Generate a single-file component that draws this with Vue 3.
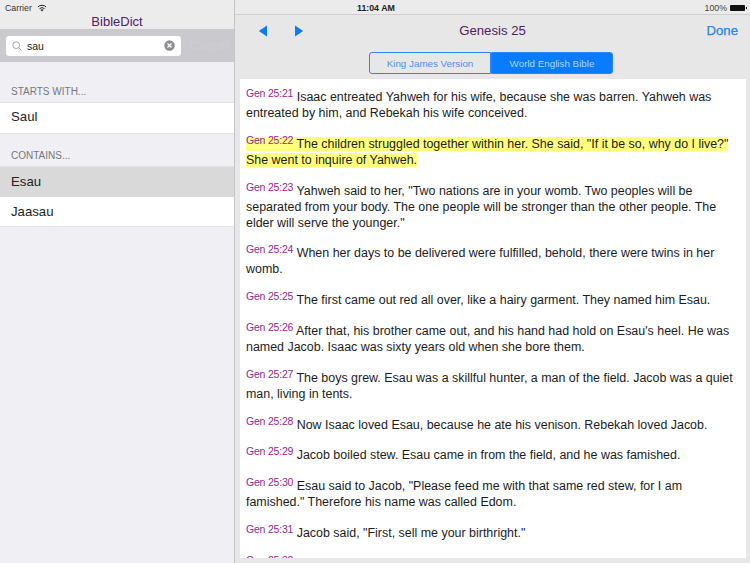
<script setup>
const verses = [
  { ref: 'Gen 25:21', text: 'Isaac entreated Yahweh for his wife, because she was barren. Yahweh was entreated by him, and Rebekah his wife conceived.' },
  { ref: 'Gen 25:22', text: 'The children struggled together within her. She said, "If it be so, why do I live?" She went to inquire of Yahweh.', hl: true },
  { ref: 'Gen 25:23', text: 'Yahweh said to her, "Two nations are in your womb. Two peoples will be separated from your body. The one people will be stronger than the other people. The elder will serve the younger."' },
  { ref: 'Gen 25:24', text: 'When her days to be delivered were fulfilled, behold, there were twins in her womb.' },
  { ref: 'Gen 25:25', text: 'The first came out red all over, like a hairy garment. They named him Esau.' },
  { ref: 'Gen 25:26', text: "After that, his brother came out, and his hand had hold on Esau's heel. He was named Jacob. Isaac was sixty years old when she bore them." },
  { ref: 'Gen 25:27', text: 'The boys grew. Esau was a skillful hunter, a man of the field. Jacob was a quiet man, living in tents.' },
  { ref: 'Gen 25:28', text: 'Now Isaac loved Esau, because he ate his venison. Rebekah loved Jacob.' },
  { ref: 'Gen 25:29', text: 'Jacob boiled stew. Esau came in from the field, and he was famished.' },
  { ref: 'Gen 25:30', text: 'Esau said to Jacob, "Please feed me with that same red stew, for I am famished." Therefore his name was called Edom.' },
  { ref: 'Gen 25:31', text: 'Jacob said, "First, sell me your birthright."' },
  { ref: 'Gen 25:32', text: 'Esau said, "Behold, I am about to die."' },
]
</script>

<template>
  <div class="app">
    <aside class="side">
      <div class="status-left">
        <span>Carrier</span>
        <svg class="wifi" width="10" height="8" viewBox="0 0 10 8">
          <path d="M5 7.6 3.5 5.8a2.3 2.3 0 0 1 3 0Z" fill="#222" />
          <path d="M2.5 4.7a3.7 3.7 0 0 1 5 0M.9 2.9a6 6 0 0 1 8.2 0" fill="none" stroke="#222" stroke-width="1" />
        </svg>
      </div>
      <div class="side-title">BibleDict</div>
      <div class="search-bar">
        <div class="search-box">
          <svg class="mag" width="10" height="10" viewBox="0 0 10 10">
            <circle cx="4.2" cy="4.2" r="3.4" fill="none" stroke="#8e8e93" stroke-width=".8" />
            <path d="M6.7 6.7 9.5 9.5" stroke="#8e8e93" stroke-width=".8" />
          </svg>
          <span class="query">sau</span>
          <svg class="clear" width="11" height="11" viewBox="0 0 11 11">
            <circle cx="5.5" cy="5.5" r="5.2" fill="#8e8e93" />
            <path d="M3.5 3.5 7.5 7.5M7.5 3.5 3.5 7.5" stroke="#fff" stroke-width="1.2" />
          </svg>
        </div>
        <span class="ghost">Cancel</span>
      </div>
      <div class="section first">STARTS WITH...</div>
      <div class="rows single">
        <div class="row">Saul</div>
      </div>
      <div class="section">CONTAINS...</div>
      <div class="rows">
        <div class="row selected">Esau</div>
        <div class="row">Jaasau</div>
      </div>
    </aside>

    <main class="detail">
      <div class="status-main">
        <span class="time">11:04 AM</span>
        <div class="battery-wrap">
          <span>100%</span>
          <span class="battery"><i></i></span>
        </div>
      </div>
      <header class="nav">
        <div class="arrows">
          <svg width="10" height="12" viewBox="0 0 10 12"><path d="M9 0.5V11.5L0.8 6Z" fill="#0a7aff" /></svg>
          <svg width="10" height="12" viewBox="0 0 10 12"><path d="M1 0.5V11.5L9.2 6Z" fill="#0a7aff" /></svg>
        </div>
        <div class="title">Genesis 25</div>
        <div class="done">Done</div>
      </header>
      <div class="seg">
        <div class="seg-item">King James Version</div>
        <div class="seg-item on">World English Bible</div>
      </div>
      <section class="panel">
        <p v-for="v in verses" :key="v.ref" class="verse">
          <span :class="{ mark: v.hl }"><span class="ref">{{ v.ref }}</span> {{ v.text }}</span>
        </p>
      </section>
    </main>
  </div>
</template>

<style>
html, body { margin: 0; padding: 0; }
</style>

<style scoped>
.app {
  width: 750px;
  height: 563px;
  display: flex;
  overflow: hidden;
  font-family: "Liberation Sans", Arial, sans-serif;
  color: #1c1c1c;
}
.side {
  width: 234px;
  flex: none;
  background: #efeff4;
  border-right: 1px solid #c4c4c8;
  display: flex;
  flex-direction: column;
}
.status-left {
  height: 15px;
  background: #ececec;
  padding-left: 5px;
  display: flex;
  align-items: center;
  gap: 5px;
  font-size: 8.8px;
  color: #333;
}
.side-title {
  height: 14px;
  background: #ececec;
  text-align: center;
  font-size: 13px;
  line-height: 13px;
  color: #51205f;
}
.search-bar {
  height: 33px;
  background: #c9c9ce;
  display: flex;
  align-items: center;
  padding-left: 6px;
}
.search-box {
  width: 175px;
  height: 20px;
  background: #fff;
  border-radius: 3px;
  display: flex;
  align-items: center;
  padding: 0 6px;
  box-sizing: border-box;
  font-size: 10.5px;
}
.mag { margin-right: 5px; }
.query { flex: 1; color: #222; }
.ghost {
  margin-left: 9px;
  font-size: 12.5px;
  color: #cfcfd3;
}
.section {
  height: 13px;
  line-height: 13px;
  margin-top: 15.5px;
  padding-left: 11px;
  font-size: 10px;
  color: #78787c;
  margin-bottom: 4px;
}
.section.first { margin-top: 23px; }
.rows {
  background: #fff;
  border-top: 1px solid #e2e2e6;
  border-bottom: 1px solid #e2e2e6;
}
.row {
  height: 29.5px;
  line-height: 29px;
  padding-left: 11px;
  font-size: 13.2px;
  color: #222;
}
.rows.single .row { line-height: 27px; }
.row.selected { background: #d9d9d9; }

.detail {
  flex: 1;
  min-width: 0;
  background: #e7e7e7;
  display: flex;
  flex-direction: column;
}
.status-main {
  height: 14px;
  border-bottom: 1px solid #cfcfcf;
  background: #ebebeb;
  position: relative;
  padding-left: 122px;
  font-size: 8.8px;
  line-height: 16px;
  color: #222;
}
.time { font-weight: bold; }
.battery-wrap {
  position: absolute;
  right: 5px;
  top: 0;
  display: flex;
  align-items: center;
  gap: 3px;
  height: 16px;
  color: #444;
}
.battery {
  width: 15px;
  height: 6px;
  background: #111;
  border-radius: 1px;
  position: relative;
  display: block;
}
.battery i {
  position: absolute;
  right: -2px;
  top: 2px;
  width: 1px;
  height: 2px;
  background: #111;
}
.nav {
  height: 30px;
  position: relative;
  display: flex;
  align-items: center;
  justify-content: center;
}
.arrows {
  position: absolute;
  left: 23px;
  top: 10px;
  display: flex;
  gap: 26px;
}
.title {
  font-size: 13.2px;
  color: #51205f;
}
.done {
  position: absolute;
  right: 12px;
  top: 8px;
  font-size: 13.2px;
  -webkit-text-stroke: 0.25px #2a83ee;
  color: #2a83ee;
}
.seg {
  margin: 7px 0 5px 134px;
  width: 244px;
  height: 22px;
  display: flex;
  font-size: 9.8px;
  flex: none;
}
.seg-item {
  flex: 1;
  display: flex;
  align-items: center;
  justify-content: center;
  border: 1px solid #2c86f2;
  border-radius: 3px 0 0 3px;
  color: #4a93e8;
}
.seg-item.on {
  background: #0a7aff;
  color: #b3d6ff;
  border-radius: 0 3px 3px 0;
}
.panel {
  margin: 0 4px 5px 5px;
  padding: 10px 6px 0;
  background: #fff;
  flex: 1;
  min-height: 0;
  overflow: hidden;
}
.verse {
  margin: 0 0 14.8px;
  font-size: 12.45px;
  line-height: 16px;
  color: #1c1c1c;
}
.ref {
  font-size: 10.5px;
  letter-spacing: -0.2px;
  line-height: 1;
  color: #93288f;
  position: relative;
  top: -4px;
}
.mark { background: #ffff80; }
</style>
